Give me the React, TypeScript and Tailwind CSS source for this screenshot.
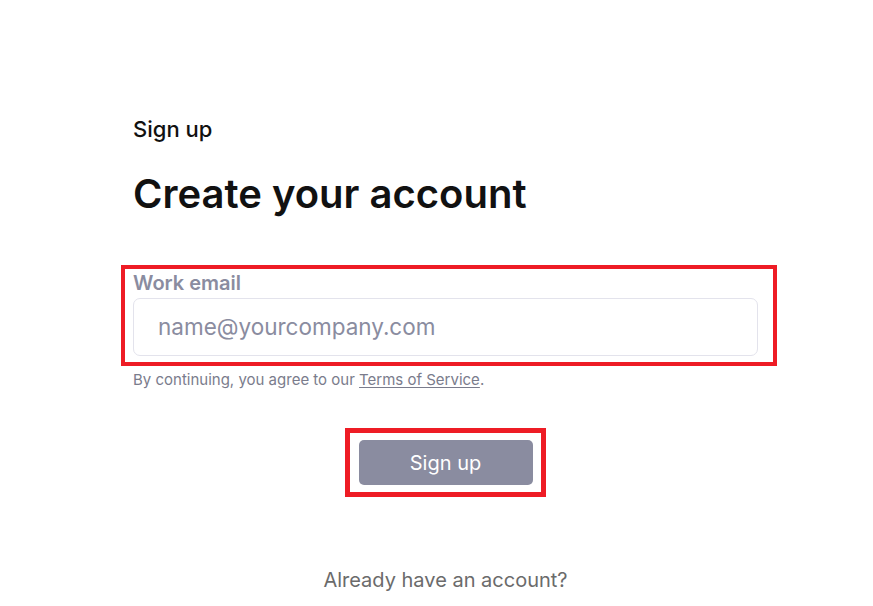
import React from "react";

export default function App() {
  return (
    <div
      className="min-h-[606px] w-full bg-white"
      style={{ fontFamily: "Inter, 'Noto Sans', sans-serif" }}
    >
      <div className="ml-[133px] w-[625px] pt-[115px]">
        <div className="text-[22px] leading-[28px] font-medium text-[#111111]">Sign up</div>
        <h1 className="mt-[27px] text-[40px] leading-[48px] font-semibold text-[#111111]">
          Create your account
        </h1>

        <div className="relative mt-[53px]">
          <div className="pointer-events-none absolute left-[-12px] right-[-19px] top-[-6px] bottom-[-10px] border-[4px] border-[#ee1c25]" />
          <label className="block text-[20px] leading-[24px] font-semibold text-[#8a8ca0]">Work email</label>
          <div className="mt-[3px] flex h-[58px] items-center rounded-[7px] border border-[#e3e3ec] bg-white pl-[24px]">
            <span className="text-[22.5px] text-[#8a8ca0]">name@yourcompany.com</span>
          </div>
        </div>

        <p className="mt-[14px] text-[15px] leading-[20px] text-[#7a7c8c]">
          By continuing, you agree to our{" "}
          <span className="underline underline-offset-2">Terms of Service</span>.
        </p>

        <div className="mt-[50px] flex justify-center">
          <div className="relative">
            <div className="pointer-events-none absolute left-[-14px] right-[-13px] top-[-12px] bottom-[-12px] border-[5px] border-[#ee1c25]" />
            <button className="flex h-[45px] w-[174px] items-center justify-center rounded-[5px] bg-[#8a8ca0] text-[20px] text-white">
              Sign up
            </button>
          </div>
        </div>

        <p className="mt-[83px] text-center text-[20px] leading-[24px] text-[#6b6b6b]">
          Already have an account?
        </p>
      </div>
    </div>
  );
}
